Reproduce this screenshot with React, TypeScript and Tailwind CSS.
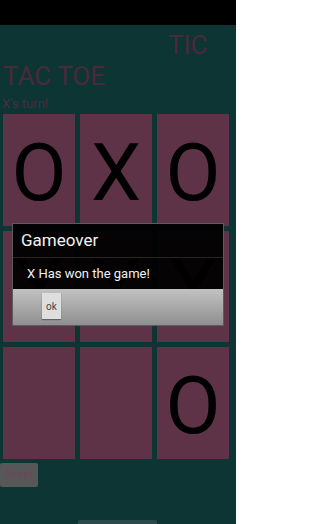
import React from "react";

const cells: string[] = ["O", "X", "O", "X", "X", "X", "", "", "O"];

export default function App() {
  return (
    <div
      className="relative w-[236px] h-[524px] overflow-hidden bg-[#0c3534] flex flex-col"
      style={{ fontFamily: "Roboto, 'Noto Sans', sans-serif" }}
    >
      <div className="h-[25px] bg-black shrink-0" />

      <div className="pt-[5px] text-[26px] leading-[31px] text-[#4a293b]">
        <div className="pl-[168px]">TIC</div>
        <div className="pl-[3px]">TAC TOE</div>
      </div>

      <div className="mt-[4px] pl-[2px] text-[13px] leading-[15px] text-[#4f2c40]">
        X's turn!
      </div>

      <div className="mt-[3px] ml-[3px] w-[226px] h-[345px] grid grid-cols-3 grid-rows-3 gap-[5px]">
        {cells.map((c, i) => (
          <div
            key={i}
            className="bg-[#5e3348] flex items-center justify-center pt-[6px] text-[80px] leading-none text-black"
          >
            {c}
          </div>
        ))}
      </div>

      <div className="mt-[4px] w-[38px] h-[24px] rounded-[2px] bg-[#575757] flex items-center justify-center text-[11px] text-[#6e4658]">
        Reset
      </div>

      {/* Dialog */}
      <div className="absolute left-[12px] top-[223px] w-[212px] border border-[#5c5c5c] flex flex-col">
        <div className="bg-black/[0.93] flex flex-col">
          <div className="h-[33px] pl-[8px] text-[17px] leading-[33px] text-[#f2f2f2]">
            Gameover
          </div>
          <div className="h-px bg-[#2b2426]" />
          <div className="h-[31px] pl-[14px] text-[13px] leading-[31px] text-[#f2f2f2]">
            X Has won the game!
          </div>
        </div>
        <div className="h-[36px] bg-gradient-to-b from-[#c2c2c2] to-[#8f8f8f] pt-[4px] pl-[29px]">
          <div className="w-[19px] h-[26px] bg-[#dedede] shadow-[0_1px_1px_rgba(0,0,0,0.35)] flex items-center justify-center text-[10px] text-[#444]">
            ok
          </div>
        </div>
      </div>

      {/* Home indicator */}
      <div className="absolute left-[78px] bottom-0 w-[79px] h-[4px] rounded-t-[2px] bg-[#2b4a4a]" />
    </div>
  );
}
